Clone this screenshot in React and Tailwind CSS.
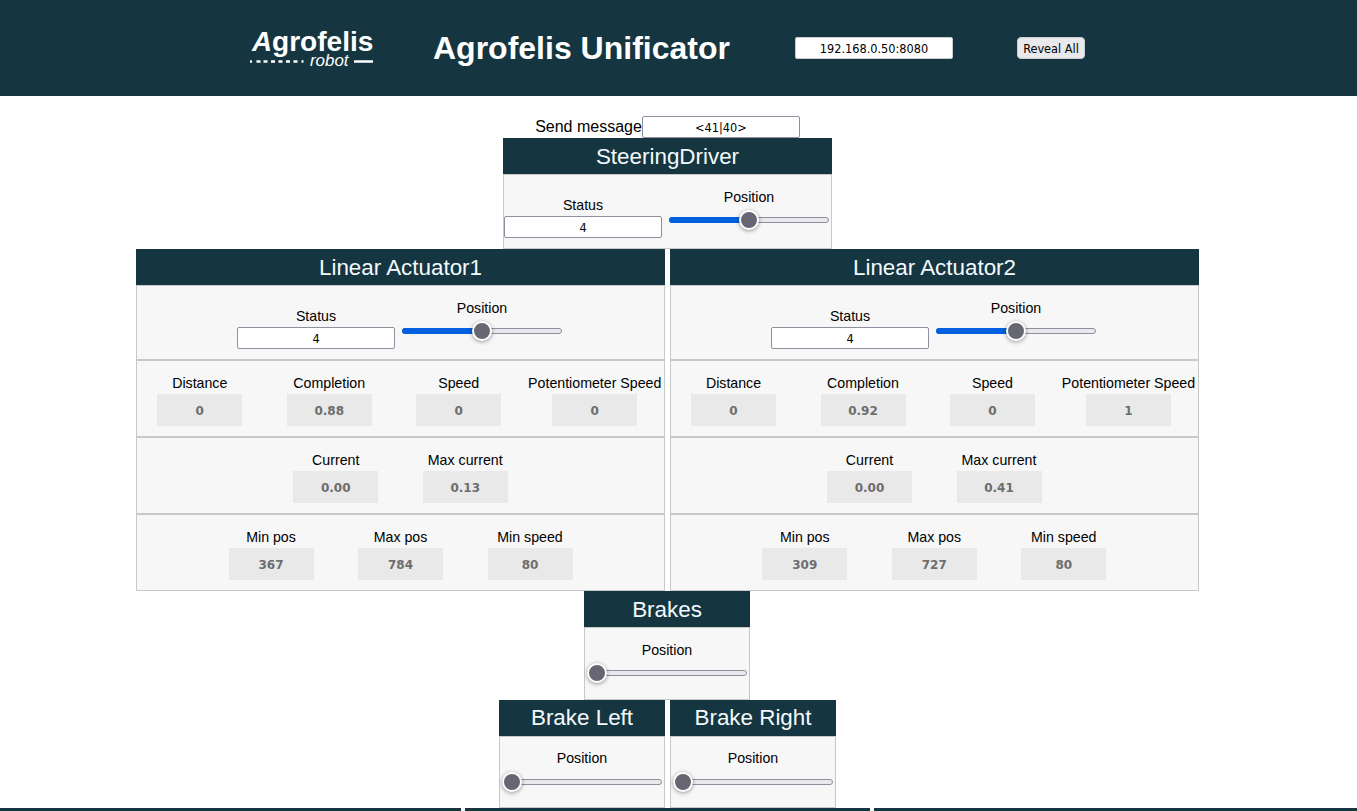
const TAHOMA = "font-['DejaVu_Sans_Condensed','DejaVu_Sans',sans-serif] [font-stretch:condensed]";

function Logo() {
  return (
    <svg className="block h-[44px] w-[126px] shrink-0" viewBox="0 0 126 44" fill="#fff" fontFamily="'Liberation Sans', Arial, sans-serif">
      <text x="2" y="25" fontSize="28" fontWeight="700" fontStyle="italic" textLength="20" lengthAdjust="spacingAndGlyphs">A</text>
      <text x="22" y="25" fontSize="28" fontWeight="700" textLength="101.5" lengthAdjust="spacingAndGlyphs">grofelis</text>
      <text x="60" y="40" fontSize="16.5" fontStyle="italic" textLength="38.5" lengthAdjust="spacingAndGlyphs">robot</text>
      <path d="M0 35.5h2M6.5 35.5h4M13.5 35.5h4M21 35.5h4M28.5 35.5h4M36 35.5h4M43.5 35.5h4M51.5 35.5h2M104 35.5h19" stroke="#fff" strokeWidth="2.4" />
    </svg>
  );
}

function TextInput({ value, light }) {
  return (
    <input
      defaultValue={value}
      className={`${TAHOMA} block h-[22px] w-[158px] shrink-0 rounded-[2px] border bg-white p-0 text-center text-[12.6px] text-black outline-none ${light ? "border-[#c4cdd0]" : "border-[#8f8f9d]"}`}
    />
  );
}

function Slider({ value }) {
  return (
    <div className="relative mx-[2px] flex h-5 w-[160px] items-center">
      <div className="flex h-1.5 w-full overflow-hidden rounded-full border border-[#8f8f9d] bg-[#e9e9ed]" />
      {value > 0 && (
        <div className="absolute left-0 h-1.5 rounded-l-full bg-[#0060df]" style={{ width: `${value}%` }} />
      )}
      <div
        className="absolute top-0 size-5 rounded-full border-2 border-white bg-[#676774] shadow-[0_1px_4px_rgba(0,0,0,0.4)]"
        style={{ left: `${(value / 100) * 140}px` }}
      />
    </div>
  );
}

function Position({ value, short }) {
  return (
    <div className="flex flex-col items-center">
      <span className="h-4 text-[14.2px] leading-4">Position</span>
      <div className={short ? "mt-1.5" : "mt-[5px]"}>
        <Slider value={value} />
      </div>
    </div>
  );
}

function Title({ children, short }) {
  return (
    <h2 className={`h-9 bg-[#153641] text-center text-[22.4px] font-normal text-[#f4fafc] ${short ? "leading-9" : "leading-[38px]"}`}>{children}</h2>
  );
}

function StatusRow() {
  return (
    <div className="flex h-[75px] items-start justify-center gap-[5px] border border-[#c8c8c8] bg-[#f7f7f8]">
      <div className="flex flex-col items-center pt-[22px]">
        <span className="h-[19px] text-[14.2px] leading-4">Status</span>
        <TextInput value="4" />
      </div>
      <div className="pt-[14px]">
        <Position value={50} />
      </div>
    </div>
  );
}

function Reading({ label, value, wide }) {
  return (
    <div className={`flex shrink-0 flex-col items-center ${wide ? "w-[142.5px]" : "w-[129.5px]"}`}>
      <span className="h-[19px] text-[14.2px] leading-4 whitespace-nowrap">{label}</span>
      <div className="h-8 w-[85px] bg-[#e9e9e9] text-center font-['DejaVu_Sans',sans-serif] text-[12px] leading-[34px] font-bold text-[#6d6d6d]">
        {value}
      </div>
    </div>
  );
}

function ReadingRow({ items, right }) {
  return (
    <div className={`flex h-[77px] justify-center border border-[#c8c8c8] bg-[#f7f7f7] pt-[14px] ${right ? "pr-[0.5px]" : ""}`}>
      {items.map(([label, value]) => (
        <Reading key={label} label={label} value={value} wide={label === "Potentiometer Speed"} />
      ))}
    </div>
  );
}

function Actuator({ name, data, right }) {
  return (
    <section className="w-[529px]">
      <Title>{name}</Title>
      <StatusRow />
      <ReadingRow right={right} items={[["Distance", data[0]], ["Completion", data[1]], ["Speed", data[2]], ["Potentiometer Speed", data[3]]]} />
      <ReadingRow right={right} items={[["Current", data[4]], ["Max current", data[5]]]} />
      <ReadingRow right={right} items={[["Min pos", data[6]], ["Max pos", data[7]], ["Min speed", data[8]]]} />
    </section>
  );
}

function Brake({ name, short }) {
  return (
    <section className="w-[166px]">
      <Title short={short}>{name}</Title>
      <div className={`flex justify-center border border-[#c8c8c8] bg-[#f7f7f8] ${short ? "h-[72px] pt-[13px]" : "h-[73px] pt-[14px]"}`}>
        <Position value={0} short={short} />
      </div>
    </section>
  );
}

export default function App() {
  return (
    <div className="h-[811px] w-[1357px] overflow-hidden bg-white font-['Liberation_Sans',Arial,sans-serif] text-black">
      <header className="flex h-24 items-center bg-[#153641] pl-[250px]">
        <Logo />
        <h1 className="ml-[57px] w-[298px] text-[32px] font-bold whitespace-nowrap text-white">Agrofelis Unificator</h1>
        <div className="ml-16">
          <TextInput value="192.168.0.50:8080" light />
        </div>
        <button className={`${TAHOMA} ml-16 h-[22px] w-[68px] rounded-[4px] border border-[#c9ced1] bg-[#e9e9ed] p-0 text-[12.6px] leading-[21px] whitespace-nowrap`}>
          Reveal All
        </button>
      </header>

      <main className="flex w-[1335px] flex-col items-center pt-5">
        <div className="flex h-[22px] items-center">
          <label className="text-[16px] leading-[22px]">Send message</label>
          <TextInput value="<41|40>" />
        </div>
        <section className="w-[329px]">
          <Title>SteeringDriver</Title>
          <StatusRow />
        </section>
        <div className="flex gap-[5px]">
          <Actuator name="Linear Actuator1" data={["0", "0.88", "0", "0", "0.00", "0.13", "367", "784", "80"]} />
          <Actuator right name="Linear Actuator2" data={["0", "0.92", "0", "1", "0.00", "0.41", "309", "727", "80"]} />
        </div>
        <div className="flex pr-px">
          <Brake name="Brakes" />
        </div>
        <div className="flex gap-[5px]">
          <Brake name="Brake Left" short />
          <Brake name="Brake Right" short />
        </div>
      </main>
      <div className="flex h-[3px] gap-1">
        <div className="w-[461px] bg-[#153641]" />
        <div className="w-[405px] bg-[#153641]" />
        <div className="flex-1 bg-[#153641]" />
      </div>
    </div>
  );
}
